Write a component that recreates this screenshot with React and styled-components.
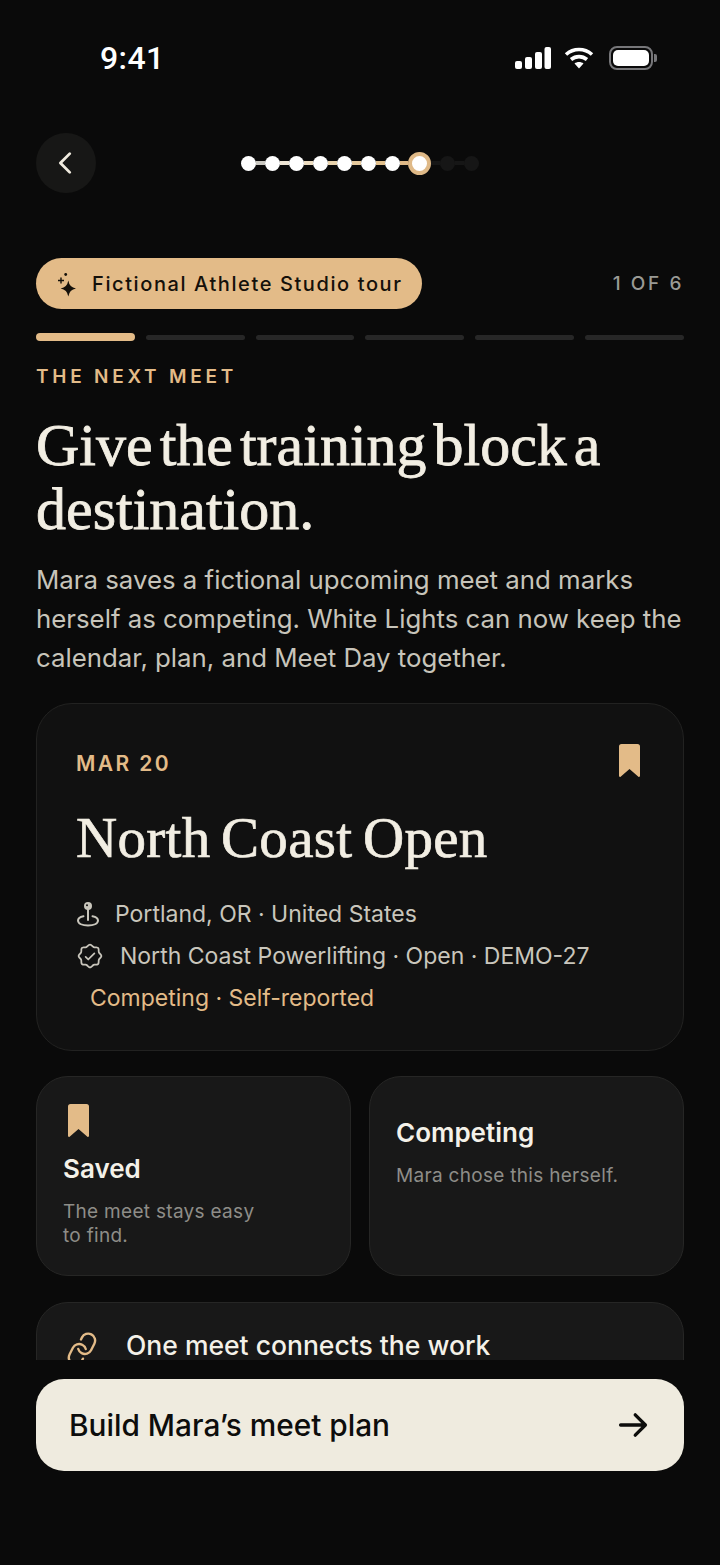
import React from 'react';
import styled, { createGlobalStyle } from 'styled-components';
import { PiCaretLeftBold, PiSealCheck, PiArrowRightBold, PiLink } from 'react-icons/pi';

const GlobalStyle = createGlobalStyle`
    html, body {
        margin: 0;
        padding: 0;
        background: #0a0a0a;
    }
    * {
        box-sizing: border-box;
    }
`

const steps = ['#c9c7c0', '#efe6d5', '#ecdcc0', '#e8d2ac', '#e5c99c', '#e2c08c', '#dfb987'];

const Sparkle = () => (
    <svg width="22" height="26" viewBox="0 0 22 26" fill="#14100a">
        <path d="M13.300 9.500Q14.400 16.400 21 17.500Q14.400 18.600 13.300 25.500Q12.200 18.600 5.600 17.500Q12.200 16.400 13.300 9.500z" />
        <path d="M5.300 6.500h1.400v2.300H9v1.400H6.700v2.300H5.300v-2.300H3V8.800h2.300z" />
        <circle cx="10.700" cy="3.500" r="1.400" />
    </svg>
);

const Bookmark = ({ width, height }) => (
    <svg width={width} height={height} viewBox="0 0 21 33" fill="#e3bb88">
        <path d="M2.500 0h16A2.500 2.500 0 0 1 21 2.500V32a1 1 0 0 1-1.600.7L10.500 25l-8.900 7.700A1 1 0 0 1 0 32V2.500A2.500 2.500 0 0 1 2.500 0z" />
    </svg>
);

const PinIcon = () => (
    <svg width="24" height="26" viewBox="0 0 24 26" fill="none" stroke="currentColor" strokeWidth="2" strokeLinecap="round">
        <circle cx="12" cy="5" r="4" fill="currentColor" stroke="none" />
        <circle cx="11" cy="4.200" r="1" fill="#111" stroke="none" />
        <path d="M12 8v11" />
        <path d="M7.500 15.300C4 16 2 17.300 2 19.600 2 22.700 6.500 24.500 12 24.500s10-1.800 10-4.900c0-2.300-2-3.600-5.500-4.300" />
    </svg>
);

const App = () => {
    return (
        <Page>
            <GlobalStyle />
            <StatusBar>
                <Time>9:41</Time>
                <StatusIcons>
                    <svg width="36" height="22" viewBox="0 0 36 22" fill="#fff">
                        <rect x="0" y="14" width="7" height="8" rx="2" />
                        <rect x="10" y="10" width="7" height="12" rx="2" />
                        <rect x="20" y="5" width="7" height="17" rx="2" />
                        <rect x="29.500" y="0" width="6.500" height="22" rx="2" />
                    </svg>
                    <svg width="30" height="22" viewBox="0 0 30 22" fill="none" stroke="#fff" strokeWidth="3.600">
                        <path d="M2 7.500c7.500-6.600 18.500-6.600 26 0" />
                        <path d="M7 12.500c4.700-3.900 11.300-3.900 16 0" />
                        <path d="M15 21.500l-4.500-5c2.600-2 6.400-2 9 0z" fill="#fff" stroke="none" />
                    </svg>
                    <Battery>
                        <BatteryFill />
                    </Battery>
                </StatusIcons>
            </StatusBar>

            <NavRow>
                <BackButton><PiCaretLeftBold size={30} /></BackButton>
                <Stepper>
                    {steps.map((color, i) => (
                        <React.Fragment key={i}>
                            <Dot />
                            <Line $color={color} $width={i === 6 ? 8 : 9} />
                        </React.Fragment>
                    ))}
                    <ActiveDot />
                    <Line $color="#161616" $width={9} />
                    <Dot $dim />
                    <Line $color="#161616" $width={9} />
                    <Dot $dim />
                </Stepper>
            </NavRow>

            <Scroll>
                <TourRow>
                    <TourPill>
                        <Sparkle />
                        Fictional Athlete Studio tour
                    </TourPill>
                    <StepCount>1 OF 6</StepCount>
                </TourRow>
                <Progress>
                    {[0, 1, 2, 3, 4, 5].map(i => <Segment key={i} $active={i === 0} />)}
                </Progress>
                <Eyebrow>THE NEXT MEET</Eyebrow>
                <Heading>Give the training block a destination.</Heading>
                <Lead>Mara saves a fictional upcoming meet and marks herself as competing. White Lights can now keep the calendar, plan, and Meet Day together.</Lead>

                <MeetCard>
                    <MeetTop>
                        <MeetDate>MAR 20</MeetDate>
                        <Bookmark width={21} height={33} />
                    </MeetTop>
                    <MeetTitle>North Coast Open</MeetTitle>
                    <MeetRow $gap={15} $first><PinIcon />Portland, OR · United States</MeetRow>
                    <MeetRow $gap={16}><PiSealCheck size={28} />North Coast Powerlifting · Open · DEMO-27</MeetRow>
                    <MeetStatus>Competing · Self-reported</MeetStatus>
                </MeetCard>

                <MiniGrid>
                    <MiniCard>
                        <MiniIcon><Bookmark width={21} height={33} /></MiniIcon>
                        <MiniTitle>Saved</MiniTitle>
                        <MiniText>The meet stays easy<br />to find.</MiniText>
                    </MiniCard>
                    <MiniCard $top={38}>
                        <MiniTitle>Competing</MiniTitle>
                        <MiniText>Mara chose this herself.</MiniText>
                    </MiniCard>
                </MiniGrid>

                <ConnectCard>
                    <LinkIcon><PiLink size={38} /></LinkIcon>
                    <ConnectTitle>One meet connects the work</ConnectTitle>
                </ConnectCard>
            </Scroll>

            <Footer>
                <PlanButton>
                    Build Mara’s meet plan
                    <PiArrowRightBold size={36} />
                </PlanButton>
            </Footer>
        </Page>
    )
}

export default App

const Page = styled.div`
    width: 720px;
    height: 1565px;
    display: flex;
    flex-direction: column;
    overflow: hidden;
    background: #0a0a0a;
    font-family: Inter, "Liberation Sans", sans-serif;
`
const StatusBar = styled.div`
    height: 133px;
    flex: none;
    display: flex;
    justify-content: space-between;
    align-items: flex-start;
    padding: 40px 67px 0 100px;
`
const Time = styled.div`
    font-family: Roboto, "Liberation Sans", sans-serif;
    font-size: 32px;
    font-weight: 500;
    line-height: 36px;
    letter-spacing: 0.4px;
    color: #fff;
`
const StatusIcons = styled.div`
    display: flex;
    align-items: center;
    gap: 13px;
    height: 36px;
`
const Battery = styled.div`
    position: relative;
    width: 44px;
    height: 24px;
    margin-left: 2px;
    padding: 2px;
    border: 2px solid #77777a;
    border-radius: 8px;

    &::after {
        content: '';
        position: absolute;
        right: -6px;
        top: 6px;
        width: 3px;
        height: 8px;
        border-radius: 0 2px 2px 0;
        background: #77777a;
    }
`
const BatteryFill = styled.div`
    width: 100%;
    height: 100%;
    border-radius: 5px;
    background: #fff;
`
const NavRow = styled.div`
    position: relative;
    height: 60px;
    flex: none;
    margin: 0 36px 65px;
    display: flex;
    align-items: center;
    justify-content: center;
`
const BackButton = styled.div`
    position: absolute;
    left: 0;
    top: 0;
    width: 60px;
    height: 60px;
    border-radius: 50%;
    display: flex;
    align-items: center;
    justify-content: center;
    background: #171716;
    color: #f0ebdf;
`
const Stepper = styled.div`
    display: flex;
    align-items: center;
`
const Dot = styled.span`
    width: 15px;
    height: 15px;
    border-radius: 50%;
    flex: none;
    background: ${props => props.$dim ? '#161616' : '#fff'};
`
const ActiveDot = styled.span`
    width: 23px;
    height: 23px;
    border-radius: 50%;
    flex: none;
    background: #fff;
    border: 4px solid #dfb987;
`
const Line = styled.span`
    width: ${props => props.$width}px;
    height: 4px;
    flex: none;
    background: ${props => props.$color};
`
const Scroll = styled.div`
    height: 1102px;
    flex: none;
    overflow: hidden;
    padding: 0 36px;
`
const TourRow = styled.div`
    display: flex;
    align-items: center;
    justify-content: space-between;
`
const TourPill = styled.div`
    width: 386px;
    height: 51px;
    border-radius: 26px;
    padding-left: 19px;
    display: flex;
    align-items: center;
    gap: 15px;
    background: #e3bb88;
    color: #14100a;
    font-size: 20px;
    font-weight: 500;
    letter-spacing: 1.6px;
    white-space: nowrap;
`
const StepCount = styled.div`
    color: #9a9a95;
    font-size: 19px;
    font-weight: 500;
    letter-spacing: 2.6px;
`
const Progress = styled.div`
    margin-top: 24px;
    display: flex;
    align-items: center;
    gap: 11px;
    height: 8px;
`
const Segment = styled.div`
    flex: 1;
    height: ${props => props.$active ? '8px' : '5px'};
    border-radius: 4px;
    background: ${props => props.$active ? '#e3bb88' : '#272727'};
`
const Eyebrow = styled.div`
    margin-top: 24px;
    color: #e3bb88;
    font-size: 19px;
    line-height: 24px;
    font-weight: 600;
    letter-spacing: 3.75px;
`
const Heading = styled.h1`
    margin: 24px 0 0;
    color: #f2eee3;
    font-family: "Liberation Serif", serif;
    font-size: 60px;
    line-height: 64px;
    font-weight: 400;
    letter-spacing: 0;
    word-spacing: -8px;
    -webkit-text-stroke: 0.8px #f2eee3;
`
const Lead = styled.p`
    margin: 19px 0 0;
    color: #c7c4ba;
    font-size: 25.8px;
    line-height: 39px;
    font-weight: 400;
`
const MeetCard = styled.div`
    margin-top: 26px;
    height: 348px;
    padding: 40px 39px 0;
    border: 1px solid #222221;
    border-radius: 36px;
    background: #111111;
`
const MeetTop = styled.div`
    display: flex;
    justify-content: space-between;
    align-items: flex-start;
    height: 33px;
    padding-right: 4px;
`
const MeetDate = styled.div`
    margin-top: 7px;
    color: #e3bb88;
    font-size: 21px;
    line-height: 26px;
    font-weight: 600;
    letter-spacing: 2.4px;
`
const MeetTitle = styled.div`
    margin-top: 31px;
    color: #f2eee3;
    font-family: "Liberation Serif", serif;
    font-size: 57px;
    line-height: 60px;
    letter-spacing: 0.3px;
    word-spacing: -4px;
    -webkit-text-stroke: 0.7px #f2eee3;
`
const MeetRow = styled.div`
    margin-top: ${props => props.$first ? '31px' : '12px'};
    display: flex;
    align-items: center;
    gap: ${props => props.$gap}px;
    height: 30px;
    color: #c9c6bc;
    font-size: 23px;
    white-space: nowrap;
`
const MeetStatus = styled.div`
    margin: 12px 0 0 14px;
    height: 30px;
    line-height: 30px;
    color: #e3bb88;
    font-size: 23px;
`
const MiniGrid = styled.div`
    margin-top: 25px;
    display: grid;
    grid-template-columns: 315px 315px;
    gap: 18px;
`
const MiniCard = styled.div`
    height: 200px;
    padding: ${props => props.$top || 27}px 26px 0;
    border: 1px solid #262625;
    border-radius: 32px;
    background: #181818;
`
const MiniIcon = styled.div`
    height: 33px;
    padding-left: 5px;
    margin-bottom: 14px;
`
const MiniTitle = styled.div`
    color: #f4f1e8;
    font-size: 26px;
    line-height: 36px;
    font-weight: 600;
`
const MiniText = styled.div`
    margin-top: 13px;
    color: #8e8d88;
    font-size: 19px;
    line-height: 24px;
    letter-spacing: 0.3px;
`
const ConnectCard = styled.div`
    margin-top: 26px;
    height: 120px;
    padding: 24px 26px 0;
    display: flex;
    align-items: flex-start;
    gap: 25px;
    border: 1px solid #262625;
    border-radius: 32px;
    background: #181818;
`
const LinkIcon = styled.div`
    height: 38px;
    width: 38px;
    margin-top: 3px;
    color: #e3bb88;
    transform: rotate(-18deg);
`
const ConnectTitle = styled.div`
    color: #f4f1e8;
    font-size: 26.5px;
    line-height: 36px;
    font-weight: 500;
`
const Footer = styled.div`
    padding: 19px 36px 0;
`
const PlanButton = styled.div`
    height: 92px;
    padding: 0 33px;
    display: flex;
    align-items: center;
    justify-content: space-between;
    border-radius: 28px;
    background: #efebdf;
    color: #0d0d0c;
    font-size: 29.8px;
    font-weight: 500;
`
